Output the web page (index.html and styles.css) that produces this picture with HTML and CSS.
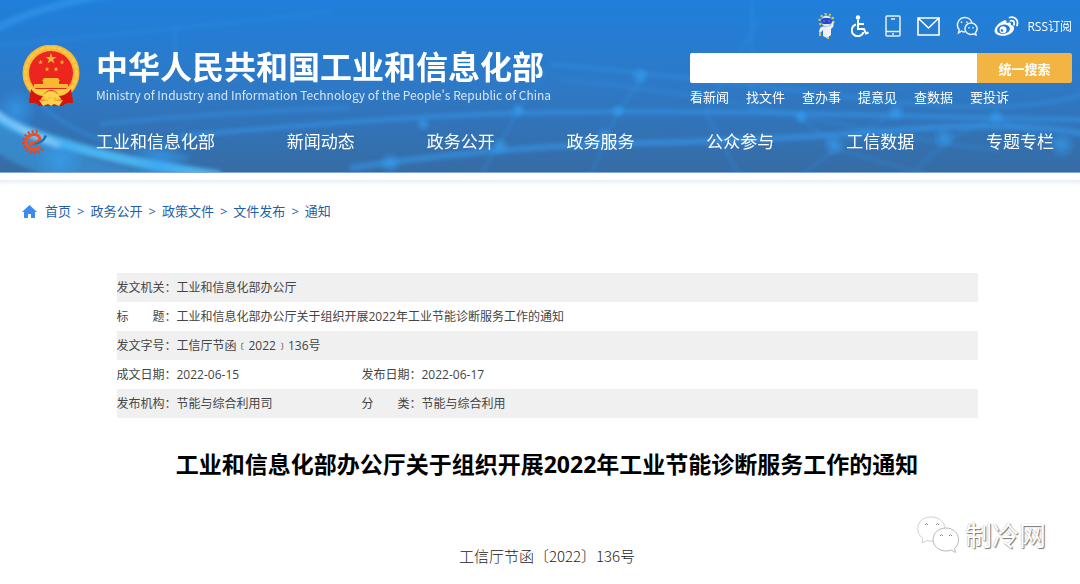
FILE: index.html
```html
<!DOCTYPE html>
<html lang="zh-CN">
<head>
  <meta charset="UTF-8">
  <meta name="viewport" content="width=device-width, initial-scale=1.0">
  <title>工业和信息化部办公厅关于组织开展2022年工业节能诊断服务工作的通知</title>
  <link rel="stylesheet" href="styles.css">
</head>
<body>

  <header class="header">
    <!-- Light trails behind the header -->
    <svg class="header-bg" viewBox="0 0 1080 172" preserveAspectRatio="none" aria-hidden="true">
      <defs>
        <radialGradient id="glow">
          <stop offset="0" stop-color="#37a5f8" stop-opacity=".6"/>
          <stop offset="1" stop-color="#37a5f8" stop-opacity="0"/>
        </radialGradient>
      </defs>
      <g class="trails" fill="none" stroke="#369cf2">
        <path d="M-10 32Q30 8 120-8" stroke-width="7" opacity=".55"/>
        <path d="M-10 46Q90 38 330 12" stroke-width="3" opacity=".25"/>
        <path d="M-10 130Q40 168 160 190" stroke="#3fb0f6" stroke-width="30" opacity=".4"/>
        <path d="M-10 112Q50 152 220 176" stroke="#4fc0fb" stroke-width="10" opacity=".85"/>
        <path d="M-10 108Q20 132 60 146" stroke="#9ed2fa" stroke-width="7" opacity=".7"/>
        <path d="M40 104Q90 150 190 158" stroke-width="3" opacity=".5"/>
        <path d="M100 124Q220 112 350 108" stroke-width="4" opacity=".4"/>
        <path d="M180 136Q400 116 520 113T780 113T1090 120" stroke-width="4" opacity=".6"/>
        <path d="M350 168Q500 146 640 143T900 130T1090 135" stroke-width="6" opacity=".55"/>
        <path d="M550 64Q700 78 860 98T1090 92" stroke-width="3" opacity=".45"/>
        <path d="M560 80Q680 90 800 116T1000 150" stroke-width="3" opacity=".3"/>
        <path d="M480 176L520 108L546 70M590 176L618 112L644 76M706 112L720 84L760 20M706 112L740 176M800 117L840 150L930 176M896 112L840 146L800 176M996 118L950 138L910 176M996 118L1060 144M175 28V60M752 0V112" stroke-width="3" opacity=".28"/>
      </g>
      <g fill="url(#glow)">
        <circle cx="16" cy="110" r="22"/>
        <circle cx="60" cy="160" r="26"/>
        <circle cx="160" cy="164" r="30"/>
        <circle cx="423" cy="124" r="8"/>
        <circle cx="390" cy="163" r="12"/>
        <circle cx="518" cy="110" r="8"/>
        <circle cx="618" cy="111" r="8"/>
        <circle cx="640" cy="76" r="10"/>
        <circle cx="500" cy="146" r="10"/>
        <circle cx="604" cy="136" r="10"/>
        <circle cx="801" cy="117" r="8"/>
        <circle cx="834" cy="145" r="12"/>
        <circle cx="896" cy="112" r="10"/>
        <circle cx="944" cy="138" r="12"/>
        <circle cx="996" cy="117" r="9"/>
        <circle cx="1062" cy="145" r="14"/>
      </g>
    </svg>

    <div class="header-top">
      <a class="brand" href="#">
        <svg class="emblem" viewBox="0 0 58 62" aria-hidden="true">
          <path d="M9 43L7 58Q14 57 17 61H41Q44 57 51 58L49 43Z" fill="#d5160f"/>
          <circle cx="29" cy="28" r="28.500" fill="#f3b63a"/>
          <circle cx="29" cy="28" r="25.500" fill="none" stroke="#fbc945" stroke-width="3" stroke-dasharray="5 1"/>
          <circle cx="29" cy="28" r="22" fill="#ed251f"/>
          <g fill="#f6b92f">
            <path id="star" d="M29 8l1.300 4h4.200l-3.400 2.500 1.300 4L29 16l-3.400 2.500 1.300-4L23.500 12h4.200z"/>
            <use href="#star" transform="translate(5.500 11) scale(.45)"/>
            <use href="#star" transform="translate(27 11) scale(.45)"/>
            <use href="#star" transform="translate(12 18) scale(.45)"/>
            <use href="#star" transform="translate(21 18) scale(.45)"/>
            <path d="M22 33h14l2 3h-1v3h9v4H12v-4h9v-3h-1z"/>
          </g>
          <path d="M11 44h36q-5 5-10 6-4-5-8-5t-8 5q-6-1-10-6z" fill="#f9d040"/>
          <path d="M9 44q5 7 12 7l-5 7-9 0zM49 44q-5 7-12 7l5 7h9z" fill="#d5160f"/>
          <path d="M21 51q3-5 8-5t8 5q-4 2-8 1-4 1-8-1zM17 55l8 1q4-4 8 0l8-1-4 6-5-2-3 2-3-2-5 2z" fill="#fbd34a"/>
        </svg>
        <span class="brand-text">
          <strong class="brand-name">中华人民共和国工业和信息化部</strong>
          <span class="brand-en">Ministry of Industry and Information Technology of the People's Republic of China</span>
        </span>
      </a>

      <div class="header-side">
        <div class="tools">
          <a href="#" aria-label="智能问答">
            <svg width="17" height="26" viewBox="0 0 17 26">
              <circle cx="8.500" cy="8" r="7" fill="none" stroke="#e8cf37" stroke-width="2" stroke-dasharray="2 2.400"/>
              <path d="M3 14q-2 2-2 5l1 1 3-3v6l4 2 4-3v-6q4-3 2-8l-3 5z" fill="#eef1fa"/>
              <circle cx="8.500" cy="8" r="5.500" fill="#dfe4f5"/>
              <rect x="3" y="5" width="11" height="6" rx="3" fill="#2a49c8"/>
              <path d="M5 8h2M10 8h2" stroke="#6f8df0"/>
              <path d="M2 20v3M10 24v2" stroke="#f0b93a" stroke-width="2"/>
            </svg>
          </a>
          <a href="#" aria-label="无障碍">
            <svg width="18" height="22" viewBox="0 0 18 22" fill="none" stroke="#fff" stroke-width="2">
              <circle cx="7" cy="2.500" r="2.200" fill="#fff" stroke="none"/>
              <path d="M7 5v9h6l2 4.500 2.500-1M7 9h6M5 9.500A6 6 0 1 0 12.500 17"/>
            </svg>
          </a>
          <a href="#" aria-label="手机版">
            <svg width="16" height="22" viewBox="0 0 16 22" fill="none" stroke="#e3effb" stroke-width="1.500">
              <rect x="1" y="1" width="14" height="20" rx="1"/>
              <path d="M6 4h4M1 16.500h14M7 19h2"/>
            </svg>
          </a>
          <a href="#" aria-label="邮箱">
            <svg width="23" height="19" viewBox="0 0 23 19" fill="none" stroke="#fff" stroke-width="1.600">
              <path d="M1 1h21v17H1zM1 1l10.500 10L22 1"/>
            </svg>
          </a>
          <a href="#" aria-label="微信">
            <svg width="22" height="20" viewBox="0 0 22 20" fill="none" stroke="#e8f2fc" stroke-width="1.500">
              <path d="M9 16q-2 0-3.500-.8L2.500 17l.7-3.200A7.500 7.500 0 1 1 16 6.500"/>
              <path d="M15 7a6 5.700 0 1 0 0 11.400q1.500 0 2.500-.6L20 19l-.5-2.500A6 5.700 0 0 0 15 7z"/>
              <path d="M5.500 5.500v1.500M11 5.500v1.500M13 11v1.500M17 11v1.500"/>
            </svg>
          </a>
          <span class="tools-end">
            <a href="#" aria-label="微博">
              <svg width="25" height="21" viewBox="0 0 25 21">
                <path d="M10 4.500c1.700-.7 3 .3 2.400 2.500 3-1.200 5-.6 4.600 2 4 1 4 4.600 1 7.400-5 4.600-15.500 4.600-17.300-.3C-.5 12 5.500 6 10 4.500z" fill="#fff"/>
                <ellipse cx="9.500" cy="13.300" rx="6.500" ry="4.600" transform="rotate(-10 9.500 13.300)" fill="#2079d5"/>
                <circle cx="9" cy="13.700" r="3.500" fill="#fff"/>
                <circle cx="8" cy="14.500" r="1.300" fill="#2079d5"/>
                <path d="M15.500 1.500Q20 0 22.500 3.500 24.200 6 23 9.500M16.500 4.800q4.500-.8 3.500 4" fill="none" stroke="#fff" stroke-width="1.800" stroke-linecap="round"/>
              </svg>
            </a>
            <a href="#">RSS订阅</a>
          </span>
        </div>
        <form class="search">
          <input type="text" class="search-input" aria-label="搜索">
          <button type="button" class="search-btn">统一搜索</button>
        </form>
        <div class="quick-links">
          <a href="#">看新闻</a>
          <a href="#">找文件</a>
          <a href="#">查办事</a>
          <a href="#">提意见</a>
          <a href="#">查数据</a>
          <a href="#">要投诉</a>
        </div>
      </div>
    </div>

    <nav class="nav">
      <a class="nav-logo" href="#" aria-label="首页">
        <svg width="28" height="26" viewBox="2 0 28 26" fill="none">
          <path d="M22.500 20A10.700 10.700 0 1 1 19 3.500" stroke="#d9482b" stroke-width="3" stroke-dasharray="2 2"/>
          <path d="M9 14.500q8 .5 11-4.500-1-5-7-4.500-7 1-7 8 1 7 8 7 4 0 6-3" stroke="#f04e23" stroke-width="3"/>
          <path d="M12 15.500q11 1 15-8-1-2-3-1 0 5-12 9z" fill="#1674bd"/>
        </svg>
      </a>
      <div class="nav-list">
        <a href="#">工业和信息化部</a>
        <a href="#">新闻动态</a>
        <a href="#">政务公开</a>
        <a href="#">政务服务</a>
        <a href="#">公众参与</a>
        <a href="#">工信数据</a>
        <a href="#">专题专栏</a>
      </div>
    </nav>
  </header>

  <main class="content">
    <div class="crumbs">
      <svg width="15" height="13" viewBox="0 0 15 13" aria-hidden="true">
        <path d="M7.500 0L15 7h-2v6H9V9H6v4H2V7H0z" fill="#3b8bf0"/>
      </svg>
      <a href="#">首页</a>
      <span>&gt;</span>
      <a href="#">政务公开</a>
      <span>&gt;</span>
      <a href="#">政策文件</a>
      <span>&gt;</span>
      <a href="#">文件发布</a>
      <span>&gt;</span>
      <a href="#">通知</a>
    </div>

    <!-- Document details -->
    <table class="meta">
      <tr>
        <th scope="row">发文机关：</th>
        <td colspan="3">工业和信息化部办公厅</td>
      </tr>
      <tr>
        <th scope="row">标　　题：</th>
        <td colspan="3">工业和信息化部办公厅关于组织开展2022年工业节能诊断服务工作的通知</td>
      </tr>
      <tr>
        <th scope="row">发文字号：</th>
        <td colspan="3">工信厅节函﹝2022﹞136号</td>
      </tr>
      <tr>
        <th scope="row">成文日期：</th>
        <td class="meta-first">2022-06-15</td>
        <th scope="row">发布日期：</th>
        <td>2022-06-17</td>
      </tr>
      <tr>
        <th scope="row">发布机构：</th>
        <td class="meta-first">节能与综合利用司</td>
        <th scope="row">分　　类：</th>
        <td>节能与综合利用</td>
      </tr>
    </table>

    <h1 class="title">工业和信息化部办公厅关于组织开展2022年工业节能诊断服务工作的通知</h1>
    <p class="doc-number">工信厅节函〔2022〕136号</p>
  </main>

  <div class="watermark">
    <svg width="42" height="38" viewBox="0 0 42 38" fill="#fff" stroke="#b9b9b9" aria-hidden="true">
      <path d="M14 1C6 1 .8 6 .8 13c0 4 2 7.500 5.200 9.500L5 27l5-2.500q4 1.200 8 .5l10-12C28 6 22 1 14 1z" stroke="#d0d0d0"/>
      <path d="M29 12c-7 0-13 5-13 11.500S22 35 29 35q3 0 5.500-1l4 2.500-1-4c2.500-2 4-5 4-9C41.500 17 36 12 29 12z"/>
      <path d="M8 9q1.500-3 3 0M19 9q1.500-3 3 0M23 20q1.500-3 3 0M32 20q1.500-3 3 0" fill="none" stroke="#888"/>
    </svg>
    <span>制冷网</span>
  </div>

</body>
</html>
```
FILE: styles.css
```css
body {
  margin: 0;
  background-color: #fff;
  color: #444;
  font-family: "Open Sans", "Noto Sans CJK SC", sans-serif;
  font-size: 13px;
}
a {
  color: inherit;
  text-decoration: none;
}
svg {
  display: block;
}

/* Header */
.header {
  position: relative;
  padding: 13px 8px 15px 22px;
  background: linear-gradient(#1f7fdb, #2e79c6 50%, #366ca5);
  border-bottom: 1px solid #7fa9d4;
  color: #fff;
}
.header-bg {
  position: absolute;
  top: 0;
  left: 0;
  width: 100%;
  height: 100%;
}
.trails {
  filter: blur(2px);
}
.header-top,
.nav {
  position: relative;
  display: flex;
}
.header-top {
  justify-content: space-between;
}
.brand {
  display: flex;
  gap: 16px;
  padding-top: 32px;
}
.emblem {
  width: 58px;
  height: 62px;
}
.brand-text {
  display: flex;
  flex-direction: column;
  font-family: "Noto Sans CJK SC", sans-serif;
  white-space: nowrap;
}
.brand-name {
  font-size: 32px;
  font-weight: 700;
  line-height: 40px;
}
.brand-en {
  color: #d5e6f7;
  font-size: 12px;
  line-height: 20px;
}
.header-side {
  width: 382px;
}
.tools {
  display: flex;
  justify-content: flex-end;
  align-items: center;
  gap: 16px;
  height: 26px;
  font-size: 12px;
}
.tools-end {
  display: flex;
  align-items: center;
  gap: 8px;
}
.search {
  display: flex;
  height: 30px;
  margin-top: 14px;
}
.search-input {
  flex: 1;
  min-width: 0;
  padding: 0 8px;
  border: 0;
  border-radius: 2px 0 0 2px;
  background-color: #fff;
}
.search-btn {
  width: 95px;
  padding: 0;
  border: 0;
  border-radius: 0 2px 2px 0;
  background-color: #f2b544;
  color: #fff;
  font-family: inherit;
  font-size: 13px;
  font-weight: 700;
  cursor: pointer;
}
.quick-links {
  display: flex;
  gap: 17px;
  margin-top: 4px;
  line-height: 20px;
}

/* Main menu */
.nav {
  align-items: center;
  gap: 46px;
  margin-top: 20px;
  padding-right: 18px;
  font-size: 17px;
  line-height: 30px;
}
.nav-list {
  display: flex;
  flex: 1;
  justify-content: space-between;
}

/* Page content */
.content {
  margin-top: 7px;
  padding: 20px 8px 0 22px;
  border-top: 1px solid #eaf0f5;
  box-shadow: inset 0 5px 5px -4px #e3ebf2;
}
.crumbs {
  display: flex;
  align-items: center;
  gap: 6px;
  color: #1f5fa8;
  line-height: 20px;
}
.crumbs svg {
  margin-right: 2px;
}
.meta {
  width: 82%;
  margin: 52px auto 0;
  border-collapse: collapse;
  font-size: 12px;
  line-height: 29px;
}
.meta tr:nth-child(odd) {
  background-color: #f0f0f0;
}
.meta th,
.meta td {
  height: 29px;
  padding: 0;
  font-weight: 400;
  text-align: left;
}
.meta th {
  width: 60px;
}
.meta .meta-first {
  width: 185px;
}
.title {
  margin: 28px 0 0;
  color: #000;
  font-size: 23px;
  font-weight: 700;
  line-height: 36px;
  text-align: center;
}
.doc-number {
  margin: 64px 0 0;
  color: #222;
  font-family: "Noto Sans CJK SC", sans-serif;
  font-size: 15px;
  font-weight: 300;
  line-height: 20px;
  text-align: center;
}

.watermark {
  position: absolute;
  right: 34px;
  bottom: 30px;
  display: flex;
  align-items: center;
  gap: 6px;
  color: #fff;
  font-family: "Noto Sans CJK SC", sans-serif;
  font-size: 27px;
  line-height: 36px;
  text-shadow: 1px 1px 1px #777, 0 0 1px #999;
}
```
